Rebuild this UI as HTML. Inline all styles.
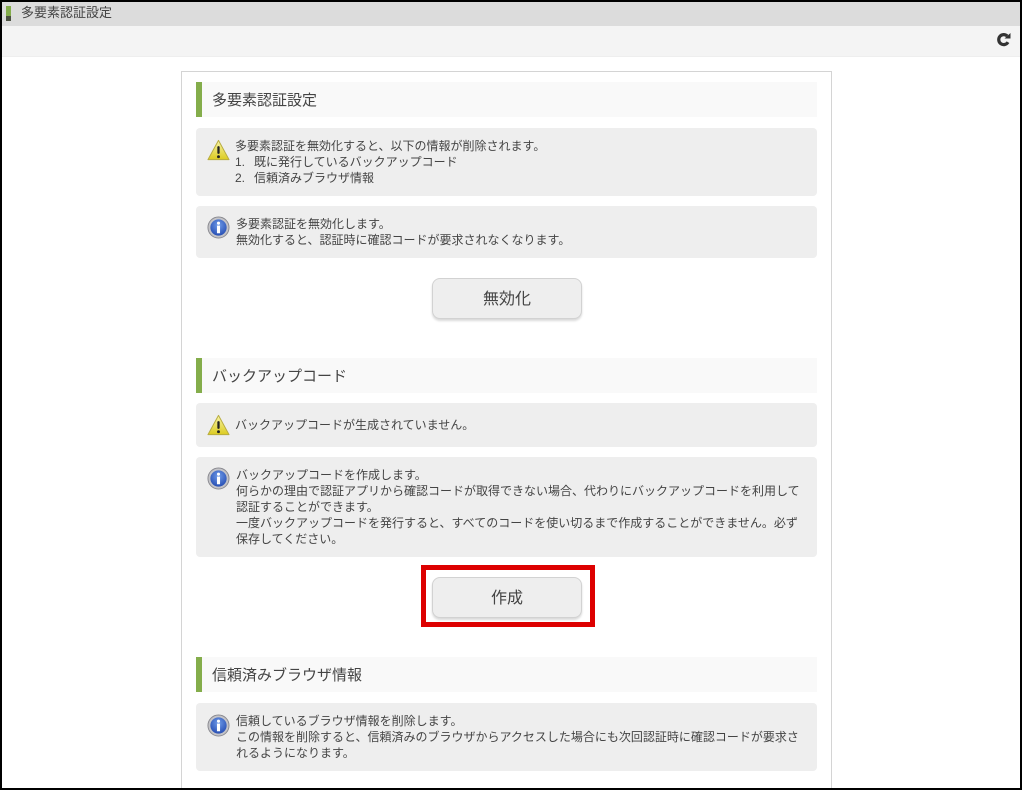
<!DOCTYPE html>
<html lang="ja"><head><meta charset="utf-8"><title>多要素認証設定</title>
<style>
html,body{margin:0;padding:0;background:#fff;width:1022px;height:790px;overflow:hidden}
body{font-family:"Liberation Sans","Noto Sans CJK JP",sans-serif;color:#444;font-size:12px}
#w{position:relative;width:1022px;height:790px;overflow:hidden}
.a{position:absolute;box-sizing:border-box}
.h{left:196px;width:621px;height:35px;background:#f9f9f9;border-left:6px solid #84ad4b;font-size:15px;line-height:37px;padding-left:10px;color:#444}
.b{left:196px;width:621px;background:#eee;border-radius:4px}
.t{position:absolute;left:40px;line-height:16px;font-size:12px;white-space:pre;color:#444}
.btn{left:432px;width:150px;height:41px;background:#eee;border:1px solid #d2d2d2;border-radius:8px;box-shadow:0 2px 2px rgba(0,0,0,.15);text-align:center;font-size:16px;line-height:42px;color:#444}
svg{position:absolute}
.n{display:inline-block;width:19px}
</style></head><body><div id="w">
<svg width="0" height="0" style="position:absolute"><defs>
<linearGradient id="y" x1="0" y1="0" x2="0" y2="1"><stop offset="0" stop-color="#f8f4a8"/><stop offset="1" stop-color="#dccc20"/></linearGradient>
<radialGradient id="i" cx=".5" cy=".35" r=".7"><stop offset="0" stop-color="#6f9be8"/><stop offset="1" stop-color="#2249b0"/></radialGradient>
<symbol id="warn" viewBox="0 0 24 22"><path d="M12 1 L23 21 L1 21 Z" fill="url(#y)" stroke="#b8ac40" stroke-width="1" stroke-linejoin="round"/><rect x="10.8" y="7" width="2.4" height="8" rx="1" fill="#222"/><circle cx="12" cy="18" r="1.5" fill="#222"/></symbol>
<symbol id="info" viewBox="0 0 24 24"><circle cx="12" cy="12" r="11" fill="#c4c4c8" stroke="#8a8a90" stroke-width="1"/><circle cx="12" cy="12" r="8.5" fill="url(#i)"/><circle cx="12" cy="7.5" r="1.6" fill="#fff"/><rect x="10.4" y="10" width="3.2" height="8" fill="#fff"/></symbol>
</defs></svg>

<div class="a" style="left:2px;top:2px;width:1018px;height:24px;background:#dcdcdc"></div>
<div class="a" style="left:2px;top:26px;width:1018px;height:31px;background:#f4f4f4;border-bottom:1px solid #eee"></div>
<div class="a" style="left:6px;top:6px;width:5px;height:10px;background:#84ad4b"></div>
<div class="a" style="left:6px;top:16px;width:5px;height:5px;background:#4a5040"></div>
<div class="a" style="left:21px;top:4px;font-size:13px;line-height:18px;color:#444">多要素認証設定</div>
<svg style="left:996px;top:32px" width="16" height="15" viewBox="0 0 16 15"><path d="M12 10.2 A5 5 0 1 1 11.2 4" fill="none" stroke="#333" stroke-width="3.2"/><path d="M8.5 6.5 L14.5 6.5 L14.5 1 Z" fill="#333"/></svg>

<div class="a" style="left:181px;top:71px;width:651px;height:730px;border:1px solid #d4d4d4"></div>

<div class="a h" style="top:82px">多要素認証設定</div>
<div class="a b" style="top:128px;height:68px"><svg style="left:11px;top:11px" width="23" height="22"><use href="#warn"/></svg><div class="t" style="top:10px;left:39px">多要素認証を無効化すると、以下の情報が削除されます。
<span class="n">1.</span>既に発行しているバックアップコード
<span class="n">2.</span>信頼済みブラウザ情報</div></div>
<div class="a b" style="top:206px;height:52px"><svg style="left:11px;top:10px" width="23" height="23"><use href="#info"/></svg><div class="t" style="top:10px">多要素認証を無効化します。
無効化すると、認証時に確認コードが要求されなくなります。</div></div>
<div class="a btn" style="top:278px">無効化</div>

<div class="a h" style="top:358px">バックアップコード</div>
<div class="a b" style="top:403px;height:44px"><svg style="left:11px;top:11px" width="23" height="22"><use href="#warn"/></svg><div class="t" style="top:14px;left:39px">バックアップコードが生成されていません。</div></div>
<div class="a b" style="top:457px;height:100px"><svg style="left:11px;top:10px" width="23" height="23"><use href="#info"/></svg><div class="t" style="top:10px">バックアップコードを作成します。
何らかの理由で認証アプリから確認コードが取得できない場合、代わりにバックアップコードを利用して
認証することができます。
一度バックアップコードを発行すると、すべてのコードを使い切るまで作成することができません。必ず
保存してください。</div></div>
<div class="a" style="left:421px;top:565px;width:174px;height:62px;border:5px solid #dd0000"></div>
<div class="a btn" style="top:577px">作成</div>

<div class="a h" style="top:657px">信頼済みブラウザ情報</div>
<div class="a b" style="top:703px;height:68px"><svg style="left:11px;top:11px" width="23" height="23"><use href="#info"/></svg><div class="t" style="top:10px">信頼しているブラウザ情報を削除します。
この情報を削除すると、信頼済みのブラウザからアクセスした場合にも次回認証時に確認コードが要求さ
れるようになります。</div></div>

<div class="a" style="left:0;top:0;width:1022px;height:790px;border:2px solid #000"></div>
</div></body></html>
